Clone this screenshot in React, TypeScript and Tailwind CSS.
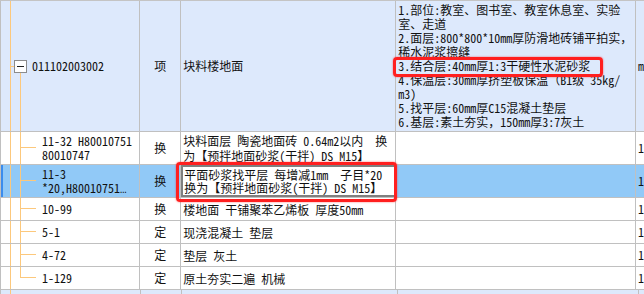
import React from 'react'

type Item = {
  code: string[]
  type: string
  name: string[]
  tall?: boolean
  last?: boolean
  selected?: boolean
}

const ITEMS: Item[] = [
  { code: ['11-32 H80010751', '80010747'], type: '换', name: ['块料面层 陶瓷地面砖 0.64m2以内  换', '为【预拌地面砂浆(干拌) DS M15】'], tall: true },
  { code: ['11-3', '*20,H80010751'], type: '换', name: ['平面砂浆找平层 每增减1mm  子目*20', '换为【预拌地面砂浆(干拌) DS M15】'], tall: true, selected: true },
  { code: ['10-99'], type: '换', name: ['楼地面 干铺聚苯乙烯板 厚度50mm'] },
  { code: ['5-1'], type: '定', name: ['现浇混凝土 垫层'] },
  { code: ['4-72'], type: '定', name: ['垫层 灰土'] },
  { code: ['1-129'], type: '定', name: ['原土夯实二遍 机械'], last: true },
]

const FEATURES = [
  '1.部位:教室、图书室、教室休息室、实验',
  '室、走道',
  '2.面层:800*800*10mm厚防滑地砖铺平拍实，',
  '稀水泥浆擦缝',
  '3.结合层:40mm厚1:3干硬性水泥砂浆',
  '4.保温层:30mm厚挤塑板保温（B1级 35kg/',
  'm3)',
  '5.找平层:60mm厚C15混凝土垫层',
  '6.基层:素土夯实，150mm厚3:7灰土',
]

const ORANGE = '#fcc87c'

function ParentTree() {
  return (
    <svg width={31} height={130} className="shrink-0">
      <line x1={9.5} y1={0} x2={9.5} y2={130} stroke={ORANGE} />
      <line x1={9} y1={65.5} x2={13} y2={65.5} stroke={ORANGE} />
      <line x1={19.5} y1={72} x2={19.5} y2={130} stroke={ORANGE} />
      <rect x={13.5} y={59.5} width={12} height={12} fill="#fff" stroke="#8c8c8c" />
      <line x1={16} y1={65.5} x2={23} y2={65.5} stroke="#222" />
    </svg>
  )
}

function Branch({ h, last }: { h: number; last?: boolean }) {
  const mid = h > 25 ? 15.5 : 10.5
  return (
    <svg width={41} height={h} className="shrink-0">
      <line x1={9.5} y1={0} x2={9.5} y2={h} stroke={ORANGE} />
      <line x1={19.5} y1={0} x2={19.5} y2={last ? mid : h} stroke={ORANGE} />
      <line x1={19} y1={mid} x2={35} y2={mid} stroke={ORANGE} />
    </svg>
  )
}

export default function App() {
  return (
    <div className="relative w-[644px] h-[294px] overflow-hidden bg-white text-[12px] text-[#111] font-['Noto_Sans_Mono_CJK_SC','Noto_Sans_CJK_SC',monospace] whitespace-pre">
      <div className="flex flex-col h-full border-l border-[#c0c0c0]">
        <div className="h-[3px] bg-[#c4c4c4] -ml-px" />

        {/* parent row */}
        <div className="flex h-[131px] bg-[#dde9fc] border-b border-[#c0c0c0]">
          <div className="flex items-center w-[140px] border-r border-[#c0c0c0]">
            <ParentTree />
            <span>011102003002</span>
          </div>
          <div className="flex items-center justify-center w-[41px] border-r border-[#c0c0c0]">项</div>
          <div className="flex items-center w-[216px] pl-[2px] border-r border-[#c0c0c0]">块料楼地面</div>
          <div className="flex flex-col w-[241px] pl-[2px] pt-[2px] leading-[14px] border-r border-[#c0c0c0]">
            {FEATURES.map((line) => (
              <div key={line} className="h-[14px]">{line}</div>
            ))}
          </div>
          <div className="flex items-center flex-1 pl-[2px]">m</div>
        </div>

        {ITEMS.map((item) => {
          const h = item.tall ? 32 : 22
          return (
            <div
              key={item.code[0]}
              className={`flex border-b border-[#c0c0c0] ${item.tall ? 'h-[33px]' : 'h-[23px]'} ${
                item.selected ? 'bg-[#91c9f7] shadow-[inset_2px_0_0_#3b8ced]' : 'bg-white'
              }`}
            >
              <div className="flex items-center w-[140px] border-r border-[#c0c0c0] overflow-hidden">
                <Branch h={h} last={item.last} />
                <div className="leading-[14px]">
                  {item.code.map((c, i) => (
                    <div key={c} className="h-[14px]">
                      {c}
                      {item.selected && i === 1 && (
                        <span className="font-['Liberation_Mono',monospace] text-[11px]">…</span>
                      )}
                    </div>
                  ))}
                </div>
              </div>
              <div className="flex items-center justify-center w-[41px] border-r border-[#c0c0c0]">{item.type}</div>
              {item.selected ? (
                <div className="flex flex-col justify-center w-[216px] pl-[1px] leading-[13px] bg-white border-2 border-[#7f7f7f]">
                  {item.name.map((n) => (
                    <div key={n} className="h-[13px]">{n}</div>
                  ))}
                </div>
              ) : (
                <div className="flex flex-col justify-center w-[216px] pl-[2px] leading-[15px] border-r border-[#c0c0c0]">
                  {item.name.map((n) => (
                    <div key={n} className="h-[15px]">{n}</div>
                  ))}
                </div>
              )}
              <div className="w-[241px] border-r border-[#c0c0c0]" />
              <div className="flex items-center flex-1 pl-[2px]">1</div>
            </div>
          )
        })}

        {/* next parent row, cut off */}
        <div className="flex flex-1 bg-[#dde9fc]">
          <div className="w-[140px] border-r border-[#c0c0c0]">
            <svg width={20} height={4}>
              <line x1={9.5} y1={0} x2={9.5} y2={4} stroke={ORANGE} />
            </svg>
          </div>
          <div className="w-[41px] border-r border-[#c0c0c0]" />
          <div className="w-[216px] border-r border-[#c0c0c0]" />
          <div className="w-[241px] border-r border-[#c0c0c0]" />
          <div className="flex-1" />
        </div>
      </div>

      {/* annotation boxes */}
      <div className="absolute left-[393px] top-[57px] w-[210px] h-[20px] rounded-[4px] border-[3px] border-[#ff1f1f] shadow-[0_0_2px_rgba(255,0,0,0.6)]" />
      <div className="absolute left-[176px] top-[162px] w-[221px] h-[40px] rounded-[4px] border-[3px] border-[#ff1f1f] shadow-[0_0_2px_rgba(255,0,0,0.6)]" />
    </div>
  )
}
